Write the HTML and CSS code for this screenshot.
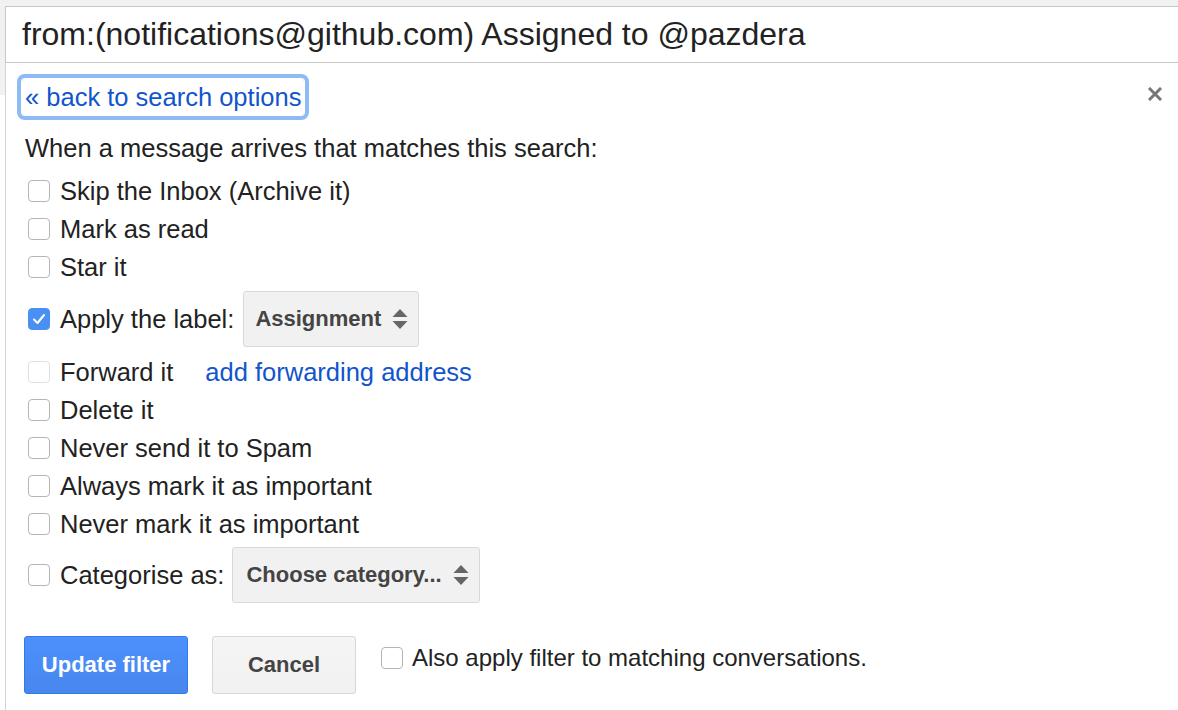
FILE: index.html
```html
<!DOCTYPE html>
<html>
<head>
<meta charset="utf-8">
<link rel="stylesheet" href="styles.css">
</head>
<body>
<div class="search">from:(notifications@github.com) Assigned to @pazdera</div>
<div class="panel">
  <div class="top-row">
    <a class="back" href="#">« back to search options</a>
    <span class="close"><svg width="14" height="14" viewBox="0 0 14 14"><path d="M2 2 L12 12 M12 2 L2 12" stroke="#777" stroke-width="3" stroke-linecap="square"/></svg></span>
  </div>
  <div class="intro">When a message arrives that matches this search:</div>
  <div class="options">
    <div class="opt"><span class="cb"></span><span>Skip the Inbox (Archive it)</span></div>
    <div class="opt"><span class="cb"></span><span>Mark as read</span></div>
    <div class="opt"><span class="cb"></span><span>Star it</span></div>
    <div class="opt opt-sel opt-label">
      <span class="cb checked"><svg width="22" height="22" viewBox="0 0 22 22"><path d="M6 11.5 L9.5 15 L16 7" fill="none" stroke="#fff" stroke-width="2" stroke-linecap="round" stroke-linejoin="round"/></svg></span>
      <span>Apply the label:</span>
      <div class="select select-label">Assignment<svg class="arrows" width="16" height="20" viewBox="0 0 16 20"><path d="M0.5 8 L8 0 L15.5 8 Z M0.5 12 L15.5 12 L8 20 Z" fill="#666"/></svg></div>
    </div>
    <div class="opt"><span class="cb disabled"></span><span>Forward it</span><a class="fwd" href="#">add forwarding address</a></div>
    <div class="opt"><span class="cb"></span><span>Delete it</span></div>
    <div class="opt"><span class="cb"></span><span>Never send it to Spam</span></div>
    <div class="opt"><span class="cb"></span><span>Always mark it as important</span></div>
    <div class="opt"><span class="cb"></span><span>Never mark it as important</span></div>
    <div class="opt opt-sel opt-cat">
      <span class="cb"></span>
      <span>Categorise as:</span>
      <div class="select select-cat">Choose category...<svg class="arrows" width="16" height="20" viewBox="0 0 16 20"><path d="M0.5 8 L8 0 L15.5 8 Z M0.5 12 L15.5 12 L8 20 Z" fill="#666"/></svg></div>
    </div>
  </div>
  <div class="actions">
    <button class="btn btn-primary">Update filter</button>
    <button class="btn btn-default">Cancel</button>
    <div class="also"><span class="cb"></span><span>Also apply filter to matching conversations.</span></div>
  </div>
</div>
</body>
</html>
```

FILE: styles.css
```css
html, body {
  margin: 0;
  padding: 0;
}
body {
  width: 1178px;
  height: 710px;
  overflow: hidden;
  font-family: "Liberation Sans", Arial, sans-serif;
  color: #222;
  background:
    linear-gradient(#f1f1f1, #f1f1f1) no-repeat 0 0 / 100% 6px,
    linear-gradient(#f1f1f1, #f1f1f1) no-repeat 0 0 / 5px 95px,
    #fff;
}
.search {
  box-sizing: border-box;
  margin: 6px 0 0 5px;
  height: 57px;
  border: 1px solid #c8c8c8;
  border-right: none;
  background: #fff;
  padding-left: 16px;
  font-size: 32px;
  line-height: 55px;
  color: #222;
  white-space: nowrap;
}
.panel {
  box-sizing: border-box;
  margin-left: 5px;
  height: 647px;
  border-left: 1px solid #d4d4d4;
  background: #fff;
  padding: 16px 16px 0 19px;
  font-size: 25.5px;
}
.top-row {
  display: flex;
  justify-content: space-between;
  align-items: flex-start;
  height: 37px;
}
.back {
  display: inline-block;
  height: 36px;
  line-height: 36px;
  padding: 0 3px;
  margin-left: -3px;
  color: #15c;
  text-decoration: none;
  border-radius: 3px;
  box-shadow: 0 0 0 1px #fff, 0 0 0 5px #8ebbf6;
}
.close {
  display: block;
  margin-top: 8px;
  width: 14px;
  height: 14px;
}
.close svg {
  display: block;
}
.intro {
  margin-top: 13px;
  line-height: 38px;
}
.options {
  margin-top: 5px;
}
.opt {
  display: flex;
  align-items: center;
  height: 38px;
  white-space: nowrap;
}
.opt-sel {
  height: auto;
}
.opt-label {
  padding: 5px 0 6px;
}
.opt-cat {
  padding: 4px 0 0;
}
.cb {
  box-sizing: border-box;
  flex: none;
  width: 22px;
  height: 22px;
  margin: 0 10px 0 3px;
  border: 1px solid #b5b5b5;
  border-radius: 4px;
  background: #fff;
}
.cb svg {
  display: block;
  margin: -1px;
}
.cb.checked {
  background: #4a90f2;
  border-color: #4a90f2;
}
.cb.disabled {
  border-color: #e0e0e0;
}
.select {
  box-sizing: border-box;
  display: flex;
  align-items: center;
  height: 56px;
  margin-left: 10px;
  padding: 0 11px 0 12px;
  border: 1px solid #d9d9d9;
  border-radius: 3px;
  background: #f1f1f1;
  font-size: 22px;
  font-weight: bold;
  color: #444;
}
.select-label {
  margin-left: 9px;
  padding: 0 10px 0 11px;
}
.select-label .arrows {
  margin-left: 11px;
}
.select-cat {
  margin-left: 8px;
  padding: 0 10px 0 13px;
}
.select-cat .arrows {
  margin-left: 11px;
}
.arrows {
  display: block;
  margin-left: 12px;
}
.fwd {
  margin-left: 32px;
  color: #15c;
  text-decoration: none;
}
.actions {
  display: flex;
  align-items: flex-start;
  margin-top: 33px;
}
.btn {
  box-sizing: border-box;
  height: 58px;
  border-radius: 3px;
  font-family: "Liberation Sans", Arial, sans-serif;
  font-size: 22px;
  font-weight: bold;
  padding: 0;
  margin: 0;
}
.btn-primary {
  width: 164px;
  margin-left: -1px;
  color: #fff;
  border: 1px solid #3079ed;
  background: linear-gradient(#4d90fe, #4787ed);
}
.btn-default {
  width: 144px;
  margin-left: 24px;
  color: #444;
  border: 1px solid #d8d8d8;
  background: linear-gradient(#f5f5f5, #f1f1f1);
}
.also {
  display: flex;
  align-items: center;
  height: 44px;
  margin-left: 25px;
  font-size: 24px;
  white-space: nowrap;
}
.also .cb {
  margin: 0 9px 0 0;
}
```
